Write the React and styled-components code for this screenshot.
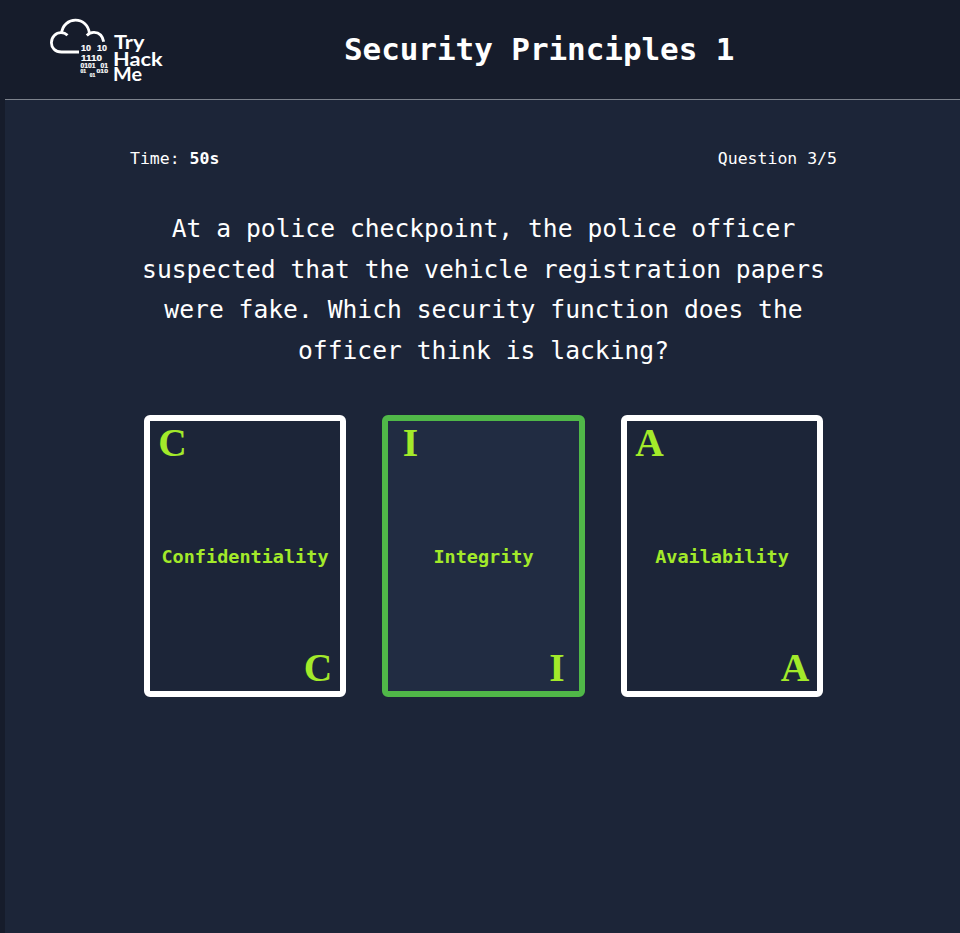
import React from "react";
import styled, { createGlobalStyle } from "styled-components";

const GlobalStyle = createGlobalStyle`
  * { box-sizing: border-box; }
  body { margin: 0; background: #161c2b; }
`;

const Page = styled.div`
  display: flex;
  flex-direction: column;
  height: 933px;
  padding-left: 5px;
  overflow: hidden;
  background: #161c2b;
  color: #fff;
  font-family: "DejaVu Sans Mono", monospace;
`;

const Header = styled.header`
  display: flex;
  align-items: flex-start;
  flex: none;
  height: 100px;
  padding: 15px 0 0 43px;
  border-bottom: 1px solid #7d828c;
`;

const Title = styled.h1`
  margin: 15px 0 0 176px;
  font-size: 31px;
  line-height: 38px;
  letter-spacing: -0.07px;
  white-space: nowrap;
`;

const Main = styled.main`
  flex: 1;
  padding: 48px 123px 0 125px;
  background: #1c2538;
`;

const Status = styled.div`
  display: flex;
  justify-content: space-between;
  font-size: 16.5px;
  line-height: 22px;
`;

const Prompt = styled.p`
  margin: 39px 0 0;
  font-size: 24.66px;
  line-height: 40.5px;
  text-align: center;
  white-space: nowrap;
`;

const Cards = styled.div`
  display: flex;
  justify-content: space-between;
  margin: 44px 14px 0;
`;

const Card = styled.button`
  display: flex;
  flex-direction: column;
  justify-content: space-between;
  width: ${(p) => (p.$selected ? 203 : 202)}px;
  height: 282px;
  padding: 2px 0 3px;
  border: 6px solid ${(p) => (p.$selected ? "#50b848" : "#fff")};
  border-radius: 6px;
  background: ${(p) => (p.$selected ? "#212c42" : "#1c2538")};
  color: #a3ea2a;
  font-family: inherit;
`;

const Corner = styled.span`
  align-self: ${(p) => (p.$end ? "flex-end" : "flex-start")};
  width: ${(p) => (p.$end ? 44 : 45)}px;
  font-family: "Liberation Serif", serif;
  font-size: 39.5px;
  font-weight: bold;
  line-height: 40px;
  text-align: center;
`;

const Label = styled.span`
  align-self: center;
  padding-top: 2px;
  font-size: 18.5px;
  font-weight: bold;
  line-height: 24px;
`;

function Logo() {
  return (
    <svg width="120" height="72" viewBox="48 15 120 72" fill="none" aria-label="TryHackMe">
      <g stroke="#fff" strokeWidth="2.8" strokeLinecap="butt" strokeLinejoin="round">
        <path d="M79 52H61.5C55 52 51.4 47.500 51.400 42.700C51.400 36.800 56 32.700 61 32.700C63.500 32.700 65.800 33.600 67.500 35.300" />
        <path d="M61.600 33C62.500 25 68.600 20.200 75.500 20.200C82.700 20.200 88.600 25.500 89.400 33.500" />
        <path d="M86.800 35.400C89 33.200 91.500 32.300 94.100 32.400C99.200 32.600 102.700 36.300 103.700 41.800" />
      </g>
      <g fill="#fff" stroke="#fff" strokeWidth="0.2" fontFamily="Liberation Sans, sans-serif" fontWeight="bold">
        <text x="81" y="51" fontSize="8.500" textLength="10" lengthAdjust="spacingAndGlyphs">10</text>
        <text x="97" y="51" fontSize="8.500" textLength="10" lengthAdjust="spacingAndGlyphs">10</text>
        <text x="81" y="61" fontSize="8.500" textLength="21" lengthAdjust="spacingAndGlyphs">1110</text>
        <text x="80.500" y="68" fontSize="6.400" textLength="15" lengthAdjust="spacingAndGlyphs">0101</text>
        <text x="100.500" y="68" fontSize="6.400" textLength="7.500" lengthAdjust="spacingAndGlyphs">01</text>
        <text x="80.500" y="73" fontSize="4.500" textLength="5.500" lengthAdjust="spacingAndGlyphs">01</text>
        <text x="96.500" y="73.400" fontSize="6.200" textLength="11.500" lengthAdjust="spacingAndGlyphs">010</text>
        <text x="89.800" y="77.200" fontSize="4.500" textLength="5.500" lengthAdjust="spacingAndGlyphs">01</text>
      </g>
      <g fill="#fff" fontFamily="Lato, sans-serif" fontWeight="bold" fontSize="18.500">
        <text x="114" y="48.500" textLength="30.500" lengthAdjust="spacingAndGlyphs">Try</text>
        <text x="113" y="65.500" textLength="49.500" lengthAdjust="spacingAndGlyphs">Hack</text>
        <text x="113" y="81" textLength="29" lengthAdjust="spacingAndGlyphs">Me</text>
      </g>
    </svg>
  );
}

const options = [
  { letter: "C", label: "Confidentiality" },
  { letter: "I", label: "Integrity", selected: true },
  { letter: "A", label: "Availability" },
];

export default function App() {
  return (
    <Page>
      <GlobalStyle />
      <Header>
        <Logo />
        <Title>Security Principles 1</Title>
      </Header>
      <Main>
        <Status>
          <span>Time: <b>50s</b></span>
          <span>Question 3/5</span>
        </Status>
        <Prompt>
          At a police checkpoint, the police officer<br />
          suspected that the vehicle registration papers<br />
          were fake. Which security function does the<br />
          officer think is lacking?
        </Prompt>
        <Cards>
          {options.map((o) => (
            <Card key={o.letter} $selected={o.selected}>
              <Corner>{o.letter}</Corner>
              <Label>{o.label}</Label>
              <Corner $end>{o.letter}</Corner>
            </Card>
          ))}
        </Cards>
      </Main>
    </Page>
  );
}
